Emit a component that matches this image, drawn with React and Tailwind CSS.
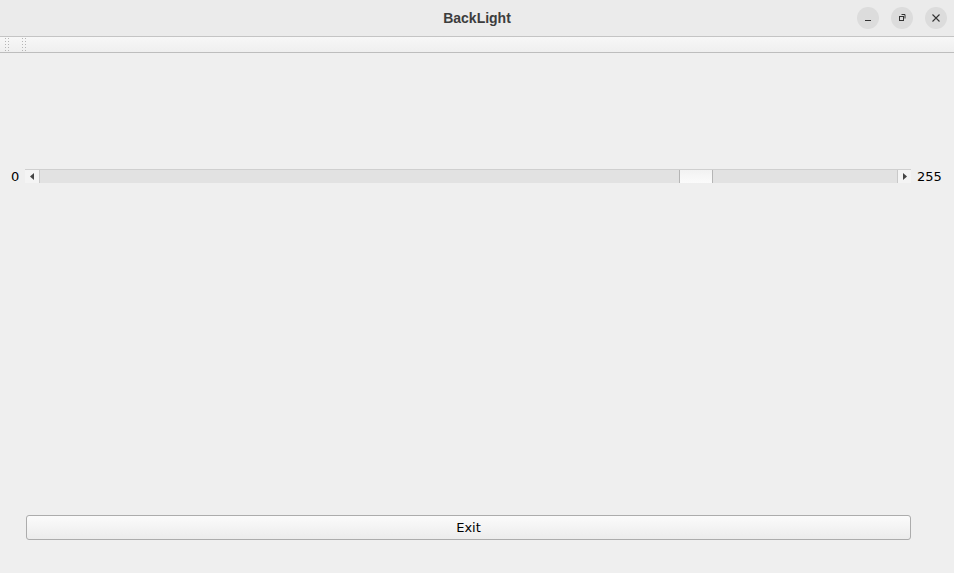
export default function App() {
  return (
    <div className="w-[954px] h-[573px] flex flex-col bg-[#efefef] overflow-hidden font-['DejaVu_Sans',sans-serif] text-[13px] text-black">
      {/* title bar */}
      <div className="relative h-[37px] shrink-0 flex items-center justify-center bg-[#ebebeb] border-b border-[#c4c4c4]">
        <span className="font-['Liberation_Sans',sans-serif] font-bold text-[14px] text-[#3d3d3d]">BackLight</span>
        <div className="absolute right-[7px] top-[7px] flex gap-[12px]">
          <button className="w-[22px] h-[22px] rounded-full bg-[#dcdcdc] flex items-center justify-center">
            <svg width="10" height="10" viewBox="0 0 10 10"><path d="M2 7.5h6" stroke="#333" strokeWidth="1" /></svg>
          </button>
          <button className="w-[22px] h-[22px] rounded-full bg-[#dcdcdc] flex items-center justify-center">
            <svg width="10" height="10" viewBox="0 0 10 10" fill="none" stroke="#333" strokeWidth="1">
              <rect x="2.5" y="3.5" width="4" height="4" />
              <path d="M4.5 1.5h3.5v4" />
            </svg>
          </button>
          <button className="w-[22px] h-[22px] rounded-full bg-[#dcdcdc] flex items-center justify-center">
            <svg width="10" height="10" viewBox="0 0 10 10"><path d="M1.5 1.5l7 7M8.5 1.5l-7 7" stroke="#333" strokeWidth="1.1" /></svg>
          </button>
        </div>
      </div>

      {/* toolbar with grip handles */}
      <div className="h-[16px] shrink-0 flex bg-gradient-to-b from-[#f7f7f7] to-[#efefef] border-b border-[#bdbdbd]">
        <div className="w-[6px] ml-[4px] h-full bg-[radial-gradient(circle,#b5b5b5_0.6px,transparent_0.8px)] bg-[length:3px_3px]" />
        <div className="w-[6px] ml-[11px] h-full bg-[radial-gradient(circle,#b5b5b5_0.6px,transparent_0.8px)] bg-[length:3px_3px]" />
      </div>

      {/* slider row */}
      <div className="mt-[115px] flex items-center h-[15px]">
        <span className="w-[25px] pl-[11px] pt-[2px]">0</span>
        <div className="flex h-[14px] w-[886px] border-t border-[#cfcfcf]">
          <div className="w-[14px] bg-[#f4f4f4] flex items-center justify-center">
            <svg width="4" height="7" viewBox="0 0 4 7"><path d="M4 0v7L0 3.5z" fill="#444" /></svg>
          </div>
          <div className="flex-1 flex bg-[#e2e2e2] border-l border-[#c9c9c9]">
            <div className="w-[639px]" />
            <div className="w-[34px] bg-gradient-to-b from-[#f2f2f2] to-[#fbfbfb] border-x border-[#b5b5b5]" />
            <div className="flex-1" />
          </div>
          <div className="w-[14px] bg-[#f4f4f4] border-l border-[#c9c9c9] flex items-center justify-center">
            <svg width="4" height="7" viewBox="0 0 4 7"><path d="M0 0v7l4-3.5z" fill="#444" /></svg>
          </div>
        </div>
        <span className="ml-[6px] pt-[2px]">255</span>
      </div>

      <div className="flex-1" />

      {/* exit button */}
      <div className="pl-[26px] pb-[33px]">
        <button className="w-[885px] h-[25px] rounded-[3px] border border-[#acacac] bg-gradient-to-b from-[#fbfbfb] to-[#ececec] flex items-center justify-center">
          Exit
        </button>
      </div>
    </div>
  );
}
